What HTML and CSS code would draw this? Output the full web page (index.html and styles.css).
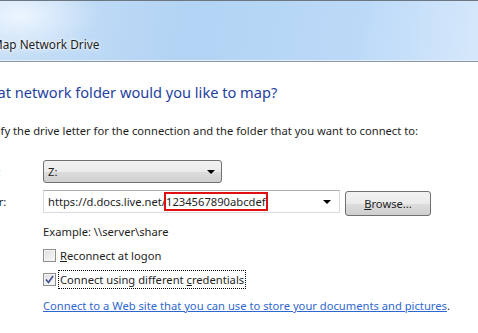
FILE: index.html
```html
<!DOCTYPE html>
<html lang="en">
<head>
  <meta charset="UTF-8" />
  <title>Map Network Drive</title>
  <link rel="stylesheet" href="styles.css">
</head>
<body>

  <header class="titlebar">
    <span class="title">Map Network Drive</span>
  </header>

  <main class="content">
    <h1>What network folder would you like to map?</h1>
    <p class="hint">Specify the drive letter for the connection and the folder that you want to connect to:</p>

    <div class="row row-drive">
      <label class="label label-drive">Drive:</label>
      <div class="select">
        <span>Z:</span>
        <span class="arrow"></span>
      </div>
    </div>

    <div class="row row-folder">
      <label class="label">Folder:</label>
      <div class="combo">
        <span>https://d.docs.live.net/<mark>1234567890abcdef</mark></span>
        <span class="arrow"></span>
      </div>
      <button class="btn"><u>B</u>rowse...</button>
    </div>

    <div class="field">
      <p class="example">Example: \\server\share</p>

      <div class="check">
        <span class="box"></span>
        <span><u>R</u>econnect at logon</span>
      </div>

      <div class="check check-second">
        <span class="box">
          <svg width="9" height="9" viewBox="0 0 9 9"><path d="M1 4.5 L3.5 7.5 L8 1" fill="none" stroke="#3c4f94" stroke-width="1.6"/></svg>
        </span>
        <span class="focus">Connect using different <u>c</u>redentials</span>
      </div>

      <p class="linkline"><a href="#">Connect to a Web site that you can use to store your documents and pictures</a>.</p>
    </div>
  </main>

</body>
</html>
```

FILE: styles.css
```css
* { box-sizing: border-box; margin: 0; padding: 0; }
html, body {
  width: 478px;
  height: 333px;
  overflow: hidden;
}
body {
  background: #fff;
  font-family: "Noto Sans", sans-serif;
  font-size: 11.2px;
  line-height: 15px;
  color: #1e1e1e;
}
.titlebar {
  height: 62px;
  border-top: 1px solid #6d7782;
  border-bottom: 1px solid #8d96a1;
  box-shadow: inset 0 -1px 0 #e2eefa;
  background:
    radial-gradient(ellipse 80px 40px at 20px 15px, rgba(240, 247, 255, 0.9), rgba(240, 247, 255, 0)),
    linear-gradient(100deg, #c9e0f7 0%, #b2d3f4 40%, #bcdaf8 75%, #d6e8fb 100%);
  padding-top: 36px;
}
.title {
  display: block;
  font-size: 11.8px;
  margin-left: -8px;
  text-shadow: 0 0 6px #fff, 0 0 3px #fff;
}
.content {
  margin-left: -27px;
  padding-top: 20px;
}
h1 {
  font-size: 14.6px;
  line-height: 20px;
  font-weight: normal;
  color: #1f3f9f;
  margin-left: 2px;
}
.hint {
  margin-top: 21px;
}
.row {
  display: flex;
  align-items: flex-start;
  margin-top: 22px;
}
.row-folder {
  margin-top: 7px;
}
.label {
  width: 73px;
  margin-left: -3px;
  line-height: 23px;
}
.label-drive {
  color: #6f9fd8;
}
.select {
  width: 179px;
  height: 23px;
  border: 1px solid #707070;
  border-radius: 3px;
  background: linear-gradient(#f2f2f2, #ebebeb 50%, #dddddd 51%, #cfcfcf);
  display: flex;
  align-items: center;
  justify-content: space-between;
  padding: 0 6px 0 4px;
}
.arrow {
  width: 0;
  height: 0;
  border-left: 4px solid transparent;
  border-right: 4px solid transparent;
  border-top: 4px solid #000;
}
.combo {
  width: 297px;
  height: 23px;
  border: 1px solid #d7d9de;
  border-top-color: #abadb3;
  background: #fff;
  display: flex;
  align-items: center;
  justify-content: space-between;
  padding: 0 8px 0 4px;
}
mark {
  background: none;
  color: inherit;
  outline: 2px solid #e01010;
}
.btn {
  margin: 1px 0 0 5px;
  width: 86px;
  height: 25px;
  border: 1px solid #707070;
  border-radius: 3px;
  background: linear-gradient(#f2f2f2, #ebebeb 50%, #dddddd 51%, #cfcfcf);
  font: inherit;
  color: inherit;
}
.field {
  margin-left: 70px;
}
.example {
  margin-top: 8px;
}
.check {
  display: flex;
  align-items: center;
  gap: 4px;
  margin-top: 9px;
}
.box {
  width: 13px;
  height: 13px;
  border: 1px solid #8f8f8f;
  background: linear-gradient(135deg, #dcdcdc, #fbfbfb);
  box-shadow: inset 0 0 0 1px #f4f4f4;
  display: flex;
  align-items: center;
  justify-content: center;
}
.focus {
  outline: 1px dotted #000;
  outline-offset: 1px;
}
.linkline {
  margin-top: 11px;
}
a {
  color: #2f67cf;
}
```
